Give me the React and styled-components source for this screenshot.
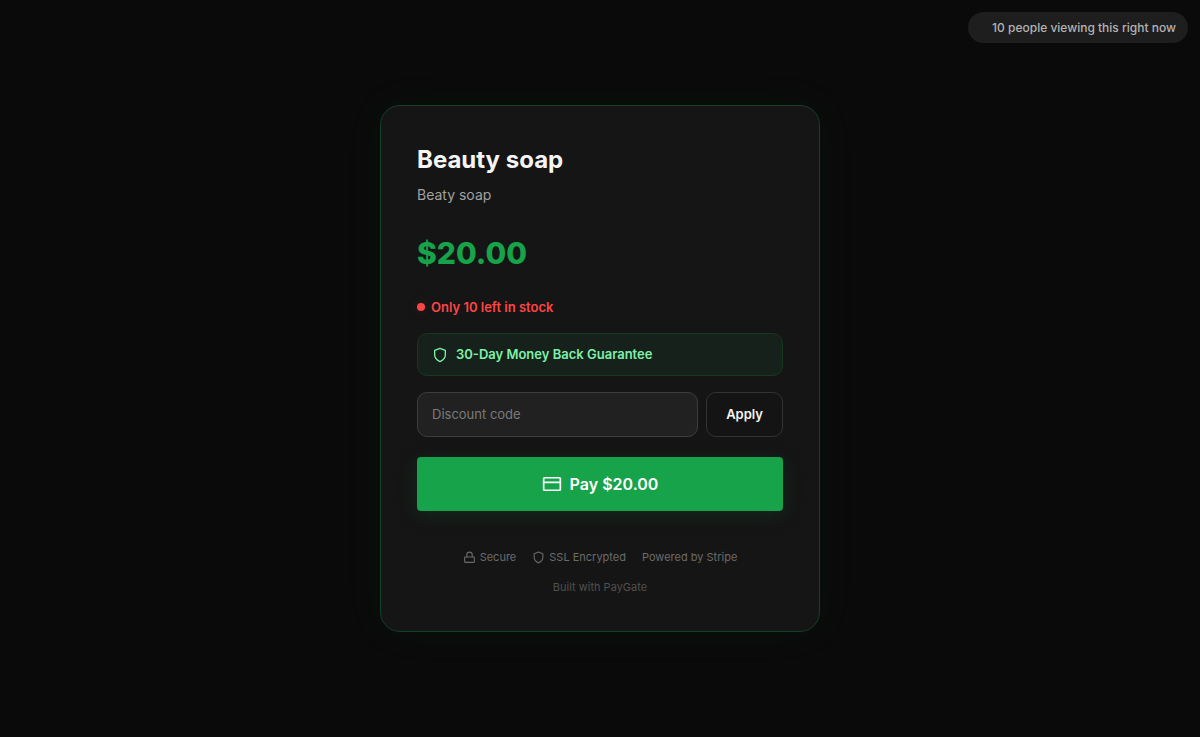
import { useState } from 'react';
import styled, { createGlobalStyle } from 'styled-components';

const GlobalStyle = createGlobalStyle`
  * {
    box-sizing: border-box;
  }

  body {
    margin: 0;
    background: #0a0a0a;
    color: #f5f5f5;
    font-family: Inter, 'Liberation Sans', sans-serif;
  }

  button, input {
    font-family: inherit;
  }
`;

const ShieldIcon = ({ size }) => (
    <Icon width={size} height={size} viewBox="0 0 24 24">
        <path d="M12 22s8-4 8-10V5l-8-3-8 3v7c0 6 8 10 8 10z" />
    </Icon>
);

const LockIcon = ({ size }) => (
    <Icon width={size} height={size} viewBox="0 0 24 24">
        <rect x="3" y="11" width="18" height="10" rx="1" />
        <path d="M7 11V7a5 5 0 0 1 10 0v4" />
    </Icon>
);

const CardIcon = ({ size }) => (
    <Icon width={size} height={size} viewBox="0 0 24 24">
        <rect x="2" y="4.5" width="20" height="15" rx="1" />
        <path d="M2 10h20" />
    </Icon>
);

const App = () => {
    const [code, setCode] = useState('');

    return (
        <>
            <GlobalStyle />
            <Viewers>10 people viewing this right now</Viewers>
            <Page>
                <Card>
                    <Title>Beauty soap</Title>
                    <Description>Beaty soap</Description>
                    <Price>$20.00</Price>
                    <Stock>Only 10 left in stock</Stock>
                    <Guarantee>
                        <ShieldIcon size={16} />
                        30-Day Money Back Guarantee
                    </Guarantee>
                    <DiscountForm onSubmit={(e) => e.preventDefault()}>
                        <DiscountInput
                            type="text"
                            aria-label="Discount code"
                            placeholder="Discount code"
                            value={code}
                            onChange={(e) => setCode(e.target.value)}
                        />
                        <ApplyButton type="submit">Apply</ApplyButton>
                    </DiscountForm>
                    <PayButton type="button">
                        <CardIcon size={20} />
                        Pay $20.00
                    </PayButton>
                    <TrustRow>
                        <TrustItem><LockIcon size={13} />Secure</TrustItem>
                        <TrustItem><ShieldIcon size={13} />SSL Encrypted</TrustItem>
                        <TrustItem>Powered by Stripe</TrustItem>
                    </TrustRow>
                    <BuiltWith>Built with PayGate</BuiltWith>
                </Card>
            </Page>
        </>
    )
}

const Icon = styled.svg`
  flex: none;
  fill: none;
  stroke: currentColor;
  stroke-width: 2;
  stroke-linecap: round;
  stroke-linejoin: round;
`;

const Viewers = styled.div`
  position: fixed;
  top: 12px;
  right: 12px;
  display: flex;
  align-items: center;
  gap: 6px;
  padding: 6px 12px;
  border-radius: 16px;
  background: #1e1e1e;
  color: #b4b4b4;
  font-size: 12px;
  font-weight: 500;
  line-height: 19px;

  &::before {
    content: '';
    width: 6px;
    height: 6px;
    border-radius: 50%;
    box-shadow: 0 0 8px rgba(34, 197, 94, 0.08);
  }
`;

const Page = styled.main`
  display: flex;
  align-items: center;
  justify-content: center;
  min-height: 100vh;
  padding: 20px;
`;

const Card = styled.section`
  width: 100%;
  max-width: 440px;
  padding: 36px;
  border: 1px solid #13402a;
  border-radius: 20px;
  background: #151515;
  box-shadow: 0 0 40px rgba(22, 163, 74, 0.06);
`;

const Title = styled.h1`
  margin: 0 0 6px;
  font-size: 24px;
  font-weight: 700;
  line-height: 36px;
`;

const Description = styled.p`
  margin: 0 0 25px;
  color: #a1a1a1;
  font-size: 14px;
  line-height: 22px;
`;

const Price = styled.div`
  margin-bottom: 22px;
  color: #16a34a;
  font-size: 30px;
  font-weight: 800;
  line-height: 44px;
`;

const Stock = styled.div`
  display: flex;
  align-items: center;
  gap: 6px;
  margin-bottom: 16px;
  color: #ff4444;
  font-size: 13px;
  font-weight: 600;
  line-height: 20px;

  &::before {
    content: '';
    width: 8px;
    height: 8px;
    border-radius: 50%;
    background: currentColor;
    box-shadow: 0 0 12px rgba(255, 68, 68, 0.15);
  }
`;

const Guarantee = styled.div`
  display: flex;
  align-items: center;
  gap: 8px;
  margin-bottom: 16px;
  padding: 10px 14px;
  border: 1px solid #163822;
  border-radius: 10px;
  background: #15211a;
  color: #7ff0a8;
  font-size: 13px;
  font-weight: 600;
  line-height: 21px;
`;

const DiscountForm = styled.form`
  display: flex;
  gap: 8px;
  margin-bottom: 20px;
`;

const DiscountInput = styled.input`
  flex: 1;
  min-width: 0;
  padding: 12px 14px;
  border: 1px solid #3d3d3d;
  border-radius: 10px;
  outline: none;
  background: #212121;
  color: #f5f5f5;
  font-size: 13px;
  line-height: 19px;

  &::placeholder {
    color: #7a7a7a;
  }
`;

const ApplyButton = styled.button`
  padding: 12px 19px;
  border: 1px solid #333;
  border-radius: 10px;
  background: #141414;
  color: #f5f5f5;
  font-size: 13px;
  font-weight: 600;
  line-height: 19px;
  cursor: pointer;
`;

const PayButton = styled.button`
  display: flex;
  align-items: center;
  justify-content: center;
  gap: 8px;
  width: 100%;
  margin-bottom: 38px;
  padding: 16px;
  border: 0;
  border-radius: 4px;
  background: #16a34a;
  color: #fff;
  font-size: 16px;
  font-weight: 600;
  line-height: 22px;
  box-shadow: 0 4px 20px rgba(22, 163, 74, 0.15);
  cursor: pointer;
`;

const TrustRow = styled.div`
  display: flex;
  justify-content: center;
  gap: 16px;
  margin-bottom: 14px;
  color: #6b6b6b;
  font-size: 11px;
  line-height: 16px;
`;

const TrustItem = styled.span`
  display: flex;
  align-items: center;
  gap: 4px;
`;

const BuiltWith = styled.div`
  color: #505050;
  font-size: 11px;
  line-height: 16px;
  text-align: center;
`;

export default App
